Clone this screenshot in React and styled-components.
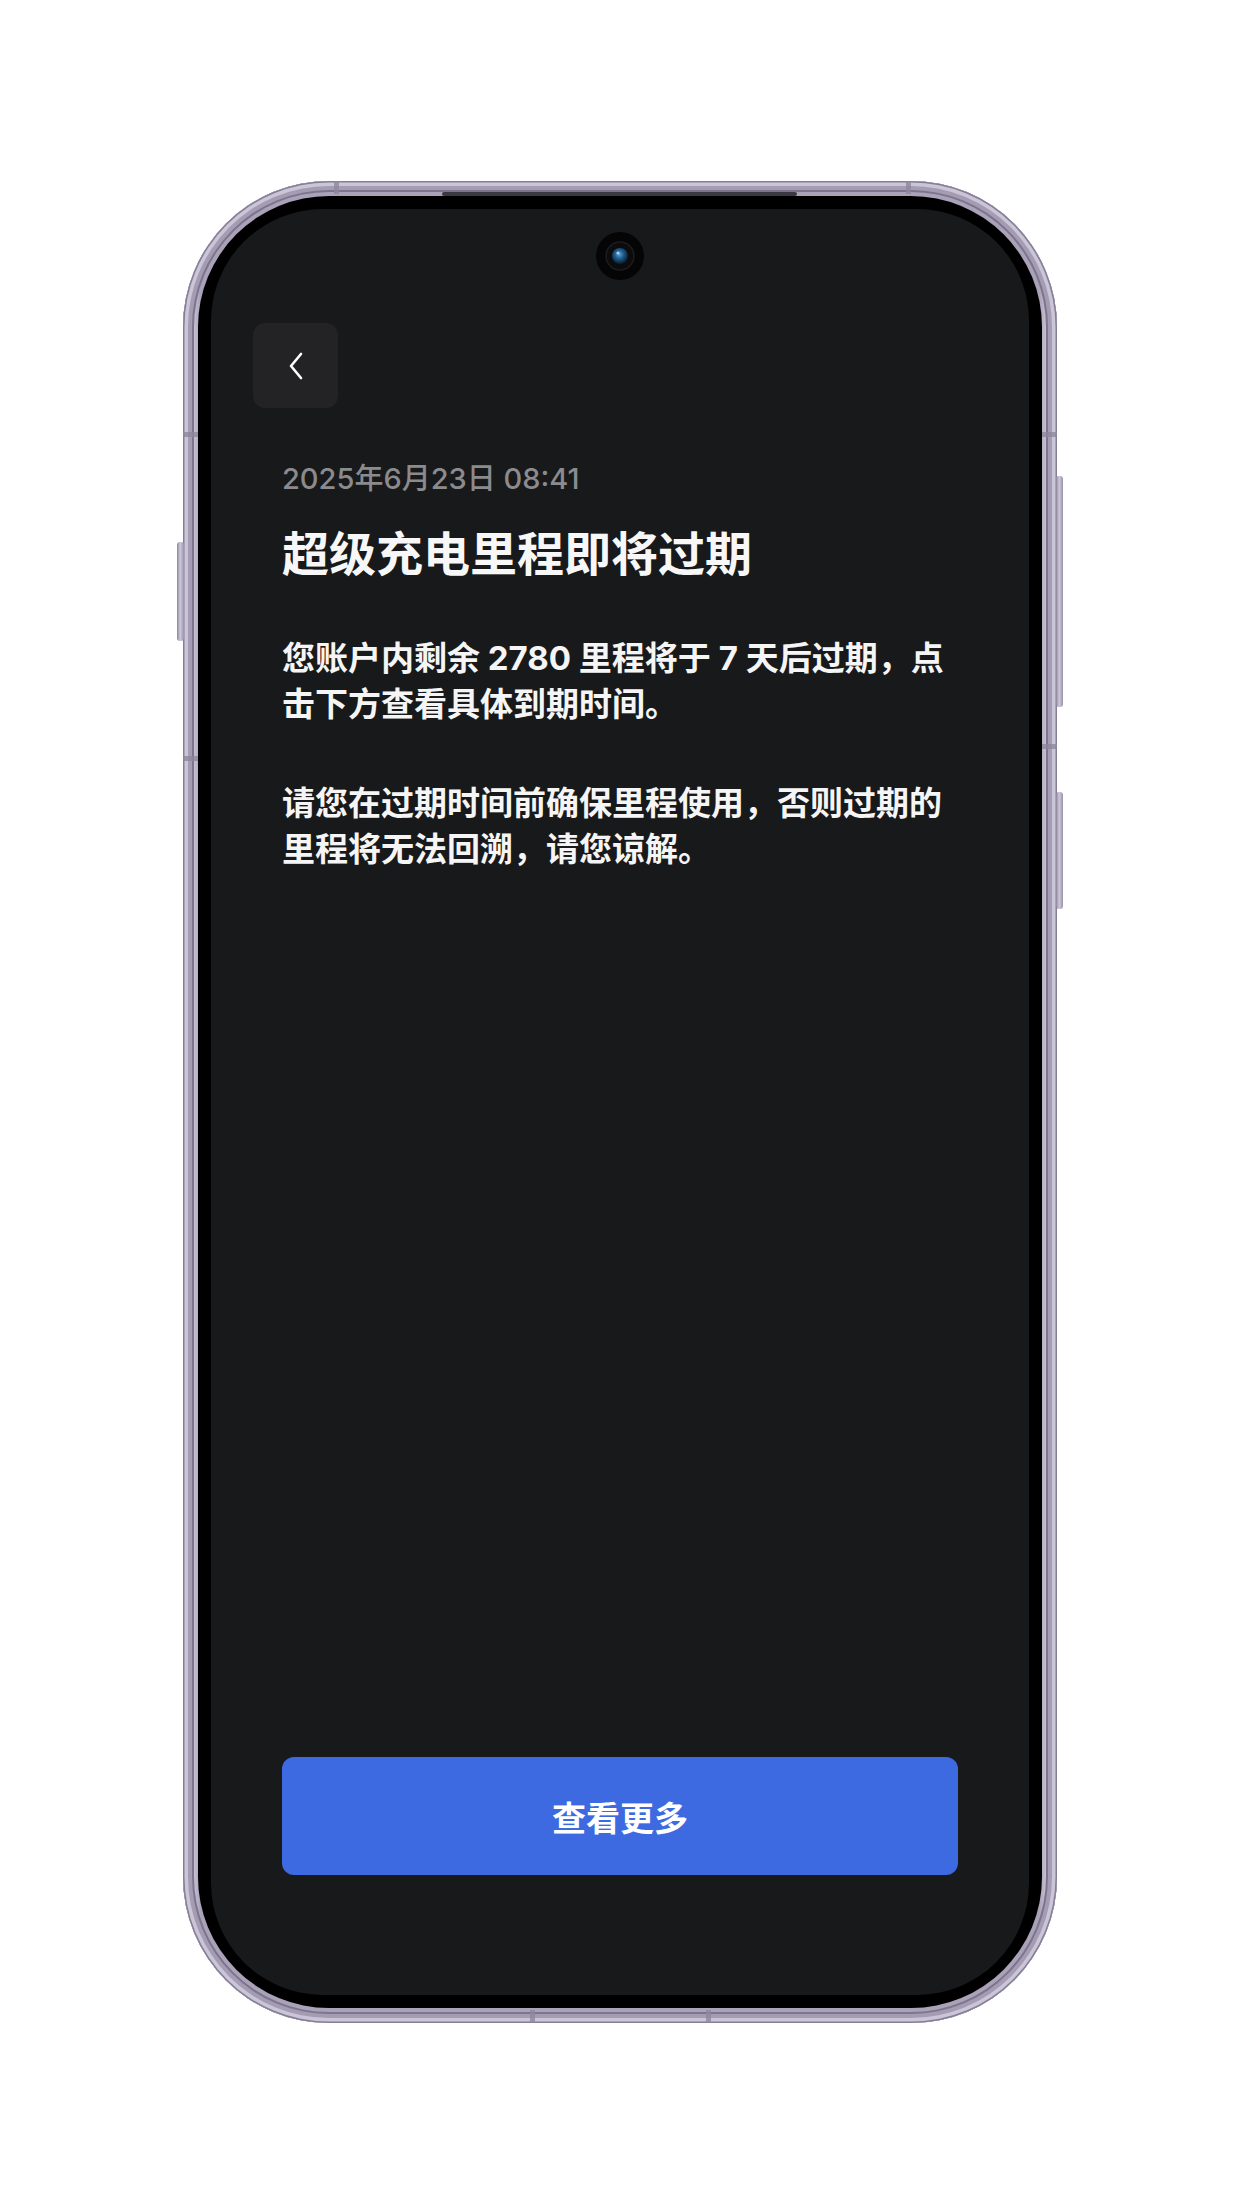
import React from "react";
import styled, { createGlobalStyle } from "styled-components";

const GlobalStyle = createGlobalStyle`
  html, body {
    margin: 0;
    padding: 0;
    background: #ffffff;
  }
  body {
    font-family: Inter, "Noto Sans CJK SC", "Noto Sans", sans-serif;
    -webkit-font-smoothing: antialiased;
  }
`;

const Page = styled.div`
  width: 1240px;
  height: 2204px;
  display: flex;
  align-items: center;
  justify-content: center;
`;

const Frame = styled.div`
  position: relative;
  width: 874px;
  height: 1842px;
  box-sizing: border-box;
  padding: 15px;
  border-radius: 146px;
  background: linear-gradient(90deg, #8f889f 0%, #c9c3d7 1.2%, #a9a2b9 2%, #a9a2b9 98%, #c9c3d7 98.8%, #8f889f 100%);
  box-shadow: inset 0 0 0 1.5px #857e95, inset 0 0 0 5px #cbc5d8, inset 0 0 0 9px #a39cb3,
    inset 0 0 0 11px #7c758b;
`;

const SideButton = styled.div`
  position: absolute;
  width: 7px;
  top: ${(p) => p.top}px;
  height: ${(p) => p.h}px;
  ${(p) => (p.side === "left" ? "left: -6px;" : "right: -6px;")}
  border-radius: 3px;
  background: linear-gradient(90deg, #8a8499, #cfc9db 45%, #9993aa);
`;

const Seam = styled.div`
  position: absolute;
  background: #8d879d;
  opacity: 0.8;
  ${(p) => p.pos}
`;

const Speaker = styled.div`
  position: absolute;
  top: 11px;
  left: 259px;
  width: 355px;
  height: 4px;
  border-radius: 2px;
  background: #3b3842;
`;

const Bezel = styled.div`
  width: 100%;
  height: 100%;
  box-sizing: border-box;
  padding: 13px;
  border-radius: 131px;
  background: #000000;
`;

const Screen = styled.div`
  position: relative;
  width: 100%;
  height: 100%;
  box-sizing: border-box;
  border-radius: 112px;
  background: #18191b;
  overflow: hidden;
  display: flex;
  flex-direction: column;
  padding: 114px 71px 120px;
`;

const Camera = styled.svg`
  position: absolute;
  top: 23px;
  left: 385px;
`;

const BackButton = styled.button`
  width: 85px;
  height: 85px;
  margin-left: -29px;
  border: none;
  padding: 0;
  border-radius: 12px;
  background: #232325;
  display: flex;
  align-items: center;
  justify-content: center;
  cursor: pointer;
`;

const DateText = styled.div`
  margin-top: 52px;
  font-size: 29px;
  line-height: 38px;
  font-weight: 500;
  color: #8b8b8e;
`;

const Title = styled.h1`
  margin: 25px 0 0;
  font-size: 47px;
  line-height: 62px;
  font-weight: 700;
  color: #f7f7f7;
`;

const Body = styled.div`
  flex: 1;
  margin-top: 50px;
`;

const Paragraph = styled.p`
  margin: 0 0 53px;
  font-size: 33px;
  line-height: 46px;
  font-weight: 700;
  color: #f5f5f5;
`;

const PrimaryButton = styled.button`
  width: 100%;
  height: 118px;
  border: none;
  border-radius: 12px;
  background: #3d6ae0;
  color: #ffffff;
  font-family: inherit;
  font-size: 34px;
  font-weight: 700;
  cursor: pointer;
`;

function App() {
  return (
    <>
      <GlobalStyle />
      <Page>
        <Frame>
          <SideButton side="left" top={361} h={99} />
          <SideButton side="right" top={295} h={231} />
          <SideButton side="right" top={611} h={117} />
          <Seam pos="top: 0; left: 151px; width: 5px; height: 13px;" />
          <Seam pos="top: 0; left: 723px; width: 5px; height: 13px;" />
          <Seam pos="top: 251px; left: 0; width: 15px; height: 5px;" />
          <Seam pos="top: 575px; left: 0; width: 15px; height: 5px;" />
          <Seam pos="top: 563px; right: 0; width: 15px; height: 5px;" />
          <Seam pos="top: 251px; right: 0; width: 15px; height: 5px;" />
          <Seam pos="bottom: 0; left: 347px; width: 5px; height: 13px;" />
          <Seam pos="bottom: 0; left: 523px; width: 5px; height: 13px;" />
          <Speaker />
          <Bezel>
            <Screen>
              <Camera width="48" height="48" viewBox="0 0 48 48">
                <defs>
                  <radialGradient id="lens" cx="45%" cy="40%" r="60%">
                    <stop offset="0%" stopColor="#5aa0d8" />
                    <stop offset="45%" stopColor="#1f5f8f" />
                    <stop offset="100%" stopColor="#0a1a2a" />
                  </radialGradient>
                </defs>
                <circle cx="24" cy="24" r="24" fill="#050505" />
                <circle cx="24" cy="24" r="14" fill="#0c0c0e" stroke="#1c1c20" strokeWidth="1.5" />
                <circle cx="24" cy="24" r="8" fill="url(#lens)" />
                <circle cx="22" cy="21" r="1.6" fill="#bfe0ff" opacity="0.8" />
              </Camera>
              <BackButton aria-label="返回">
                <svg width="16" height="28" viewBox="0 0 16 28" fill="none">
                  <path
                    d="M13 2 L3 14 L13 26"
                    stroke="#ffffff"
                    strokeWidth="2.6"
                    strokeLinecap="round"
                    strokeLinejoin="round"
                  />
                </svg>
              </BackButton>
              <DateText>2025年6月23日 08:41</DateText>
              <Title>超级充电里程即将过期</Title>
              <Body>
                <Paragraph>
                  您账户内剩余 2780 里程将于 7 天后过期，点击下方查看具体到期时间。
                </Paragraph>
                <Paragraph>
                  请您在过期时间前确保里程使用，否则过期的里程将无法回溯，请您谅解。
                </Paragraph>
              </Body>
              <PrimaryButton>查看更多</PrimaryButton>
            </Screen>
          </Bezel>
        </Frame>
      </Page>
    </>
  );
}

export default App;
